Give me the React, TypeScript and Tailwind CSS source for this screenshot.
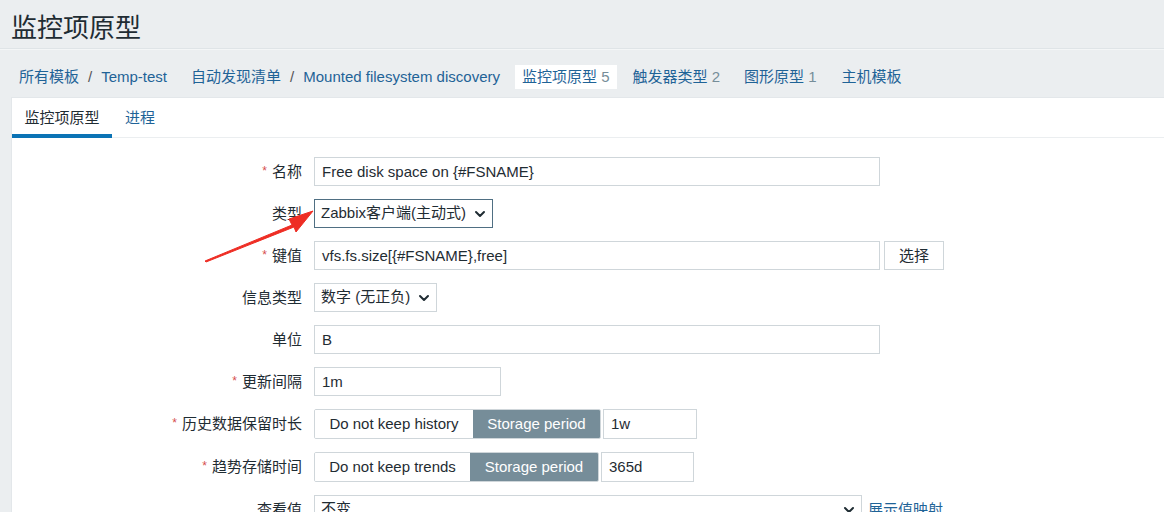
import React from "react";

const FONT = { fontFamily: '"Liberation Sans", Arial, "Noto Sans CJK SC", sans-serif' };

function Chevron() {
  return (
    <svg width="12" height="12" viewBox="0 0 12 12" className="ml-auto shrink-0">
      <path d="M2 4 L6 8 L10 4" fill="none" stroke="#1f2c33" strokeWidth="2" strokeLinecap="round" strokeLinejoin="round" />
    </svg>
  );
}

function Label({ text, req }: { text: string; req?: boolean }) {
  return (
    <div className="w-[302px] shrink-0 text-right pr-[12px] text-[15px] text-[#1f2c33] leading-[29px]">
      {req && <span className="text-[#d64e4e] text-[12px] mr-[5px] align-top">*</span>}
      {text}
    </div>
  );
}

function Input({ w, value }: { w: string; value: string }) {
  return (
    <div className={`${w} h-[29px] border border-[#cfd6da] bg-white px-[7px] text-[15px] leading-[27px] text-[#1f2c33]`}>
      {value}
    </div>
  );
}

function Segment({ left, leftW, rightW, inputW, value }: { left: string; leftW: string; rightW: string; inputW: string; value: string }) {
  return (
    <div className="flex items-center">
      <div className="flex h-[30px] border border-[#cfd6da] rounded-[2px] overflow-hidden">
        <div className={`${leftW} text-center text-[15px] leading-[28px] text-[#1f2c33] bg-white`}>{left}</div>
        <div className={`${rightW} text-center text-[15px] leading-[28px] text-white bg-[#768d99]`}>Storage period</div>
      </div>
      <div className={`${inputW} ml-[2px] h-[30px] border border-[#cfd6da] bg-white px-[7px] text-[15px] leading-[28px] text-[#1f2c33]`}>{value}</div>
    </div>
  );
}

export default function App() {
  return (
    <div className="relative w-full h-[512px] overflow-hidden bg-[#ebeef0]" style={FONT}>
      <div className="h-[49px] px-[11px] pt-[9px] border-b border-[#dfe4e7]">
        <h1 className="text-[26px] leading-[38px] text-[#1f2c33] font-normal">监控项原型</h1>
      </div>
      <div className="h-[48px] flex items-center pt-[7px] px-[19px] text-[15px] text-[#1f6397] border-t border-[#f4f6f7]">
        <span>所有模板</span>
        <span className="mx-[9px] text-[#555]">/</span>
        <span>Temp-test</span>
        <span className="ml-[24px]">自动发现清单</span>
        <span className="mx-[9px] text-[#555]">/</span>
        <span>Mounted filesystem discovery</span>
        <span className="ml-[15px] bg-white px-[7px] h-[24px] leading-[24px]">
          监控项原型 <span className="text-[#768d99]">5</span>
        </span>
        <span className="ml-[16px]">
          触发器类型 <span className="text-[#768d99]">2</span>
        </span>
        <span className="ml-[24px]">
          图形原型 <span className="text-[#768d99]">1</span>
        </span>
        <span className="ml-[25px]">主机模板</span>
      </div>
      <div className="ml-[11px] bg-white border-t border-l border-[#e3e7ea] h-full">
        <div className="flex h-[40px] border-b border-[#ebeef0] text-[15px]">
          <div className="w-[100px] text-center text-[#1f2c33] leading-[40px] border-b-[4px] border-[#0b73b5] h-[40px]">监控项原型</div>
          <div className="ml-[13px] text-[#1f6397] leading-[40px]">进程</div>
        </div>
        <div className="pt-[19px] flex flex-col gap-[13px]">
          <div className="flex">
            <Label text="名称" req />
            <Input w="w-[566px]" value="Free disk space on {#FSNAME}" />
          </div>
          <div className="flex">
            <Label text="类型" />
            <div className="w-[179px] h-[29px] border border-[#4f6f83] bg-white px-[6px] flex items-center text-[15px] text-[#1f2c33]">
              <span>Zabbix客户端(主动式)</span>
              <Chevron />
            </div>
          </div>
          <div className="flex">
            <Label text="键值" req />
            <Input w="w-[566px]" value="vfs.fs.size[{#FSNAME},free]" />
            <div className="ml-[4px] w-[60px] h-[29px] border border-[#cfd6da] bg-white text-center text-[15px] leading-[27px] text-[#1f2c33]">选择</div>
          </div>
          <div className="flex">
            <Label text="信息类型" />
            <div className="w-[123px] h-[29px] border border-[#cfd6da] bg-white px-[6px] flex items-center text-[15px] text-[#1f2c33]">
              <span>数字 (无正负)</span>
              <Chevron />
            </div>
          </div>
          <div className="flex">
            <Label text="单位" />
            <Input w="w-[566px]" value="B" />
          </div>
          <div className="flex">
            <Label text="更新间隔" req />
            <Input w="w-[187px]" value="1m" />
          </div>
          <div className="flex">
            <Label text="历史数据保留时长" req />
            <Segment left="Do not keep history" leftW="w-[158px]" rightW="w-[127px]" inputW="w-[94px]" value="1w" />
          </div>
          <div className="flex">
            <Label text="趋势存储时间" req />
            <Segment left="Do not keep trends" leftW="w-[155px]" rightW="w-[128px]" inputW="w-[93px]" value="365d" />
          </div>
          <div className="flex">
            <Label text="查看值" />
            <div className="w-[548px] h-[29px] border border-[#cfd6da] bg-white px-[6px] flex items-center text-[15px] text-[#1f2c33]">
              <span>不变</span>
              <Chevron />
            </div>
            <span className="ml-[6px] text-[15px] leading-[29px] text-[#1f6397]">展示值映射</span>
          </div>
        </div>
      </div>
      <svg className="absolute left-0 top-0 pointer-events-none" width="1164" height="512">
        <path d="M205 261 L292 225 L289 219 L313 211 L296 232 L294 227 L206 262 Z" fill="#ee2d24" stroke="#ee2d24" strokeWidth="1" strokeLinejoin="round" />
      </svg>
    </div>
  );
}
